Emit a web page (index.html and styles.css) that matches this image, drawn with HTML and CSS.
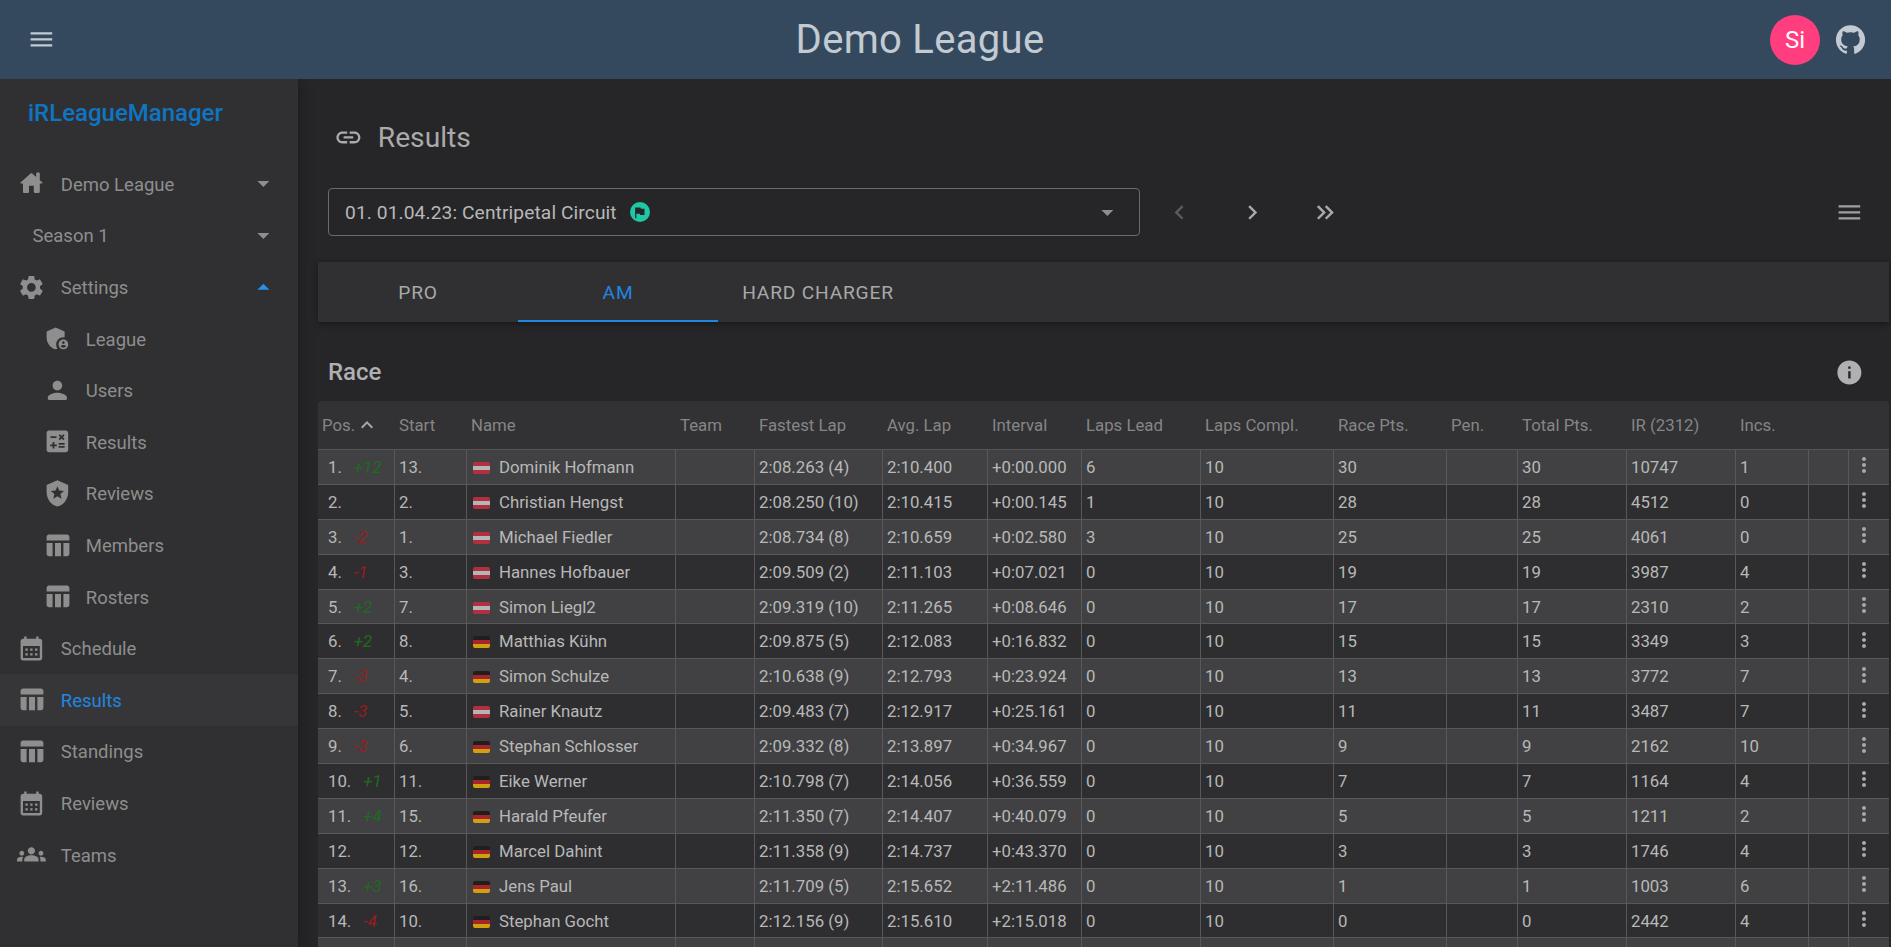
FILE: index.html
```html
<!doctype html>
<html lang="en">
    <head>
        <meta charset="UTF-8" />
        <meta name="viewport" content="width=device-width, initial-scale=1.0" />
        <title>Demo League - Results</title>
        <link rel="stylesheet" href="styles.css">
    </head>
    <body>
        <header class="appbar">
            <button class="appbar-menu" type="button" aria-label="Menu">
                <svg class="icon" viewBox="0 0 24 24"><path d="M3 18h18v-2H3v2zm0-5h18v-2H3v2zm0-7v2h18V6H3z"/></svg>
            </button>
            <div class="appbar-title">Demo League</div>
            <div class="appbar-right">
                <div class="avatar">Si</div>
                <svg class="github" viewBox="0 0 24 24"><path d="M12 .3a12 12 0 0 0-3.8 23.4c.6.1.8-.3.8-.6v-2c-3.3.7-4-1.6-4-1.6-.6-1.4-1.4-1.8-1.4-1.8-1-.7.1-.7.1-.7 1.2 0 1.9 1.2 1.9 1.2 1 1.8 2.8 1.3 3.5 1 0-.8.4-1.3.7-1.6-2.7-.3-5.5-1.3-5.5-6 0-1.2.5-2.3 1.3-3.1-.2-.4-.6-1.6 0-3.2 0 0 1-.3 3.4 1.2a11.5 11.5 0 0 1 6 0c2.3-1.5 3.3-1.2 3.3-1.2.6 1.6.2 2.8 0 3.2.9.8 1.3 1.9 1.3 3.2 0 4.6-2.8 5.6-5.5 5.9.5.4.9 1 .9 2.2v3.3c0 .3.1.7.8.6A12 12 0 0 0 12 .3"/></svg>
            </div>
        </header>

        <div class="layout">
            <aside class="sidebar">
                <div class="brand">iRLeagueManager</div>
                <nav>
                    <a class="nav-item">
                        <svg class="icon" viewBox="0 0 24 24"><path d="M10 19v-5h4v5c0 .55.45 1 1 1h3c.55 0 1-.45 1-1v-7h1.7c.46 0 .68-.57.33-.87L19 9.3V4c0-.55-.45-1-1-1h-1c-.55 0-1 .45-1 1v2.7l-3.33-3c-.38-.34-.96-.34-1.34 0l-8.36 7.53c-.34.3-.13.87.33.87H5v7c0 .55.45 1 1 1h3c.55 0 1-.45 1-1z"/></svg>
                        <span>Demo League</span>
                        <svg class="icon caret" viewBox="0 0 24 24"><path d="M7 10l5 5 5-5z"/></svg>
                    </a>
                    <a class="nav-item season">
                        <span>Season 1</span>
                        <svg class="icon caret" viewBox="0 0 24 24"><path d="M7 10l5 5 5-5z"/></svg>
                    </a>
                    <a class="nav-item">
                        <svg class="icon" viewBox="0 0 24 24"><path d="M19.14 12.94c.04-.3.06-.61.06-.94 0-.32-.02-.64-.07-.94l2.03-1.58c.18-.14.23-.41.12-.61l-1.92-3.32c-.12-.22-.37-.29-.59-.22l-2.39.96c-.5-.38-1.03-.7-1.62-.94l-.36-2.54c-.04-.24-.24-.41-.48-.41h-3.84c-.24 0-.43.17-.47.41l-.36 2.54c-.59.24-1.13.57-1.62.94l-2.39-.96c-.22-.08-.47 0-.59.22L2.74 8.87c-.12.21-.08.47.12.61l2.03 1.58c-.05.3-.09.63-.09.94s.02.64.07.94l-2.03 1.58c-.18.14-.23.41-.12.61l1.92 3.32c.12.22.37.29.59.22l2.39-.96c.5.38 1.03.7 1.62.94l.36 2.54c.05.24.24.41.48.41h3.84c.24 0 .44-.17.47-.41l.36-2.54c.59-.24 1.13-.56 1.62-.94l2.39.96c.22.08.47 0 .59-.22l1.92-3.32c.12-.22.07-.47-.12-.61l-2.01-1.58zM12 15.6c-1.98 0-3.6-1.62-3.6-3.6s1.62-3.6 3.6-3.6 3.6 1.62 3.6 3.6-1.62 3.6-3.6 3.6z"/></svg>
                        <span>Settings</span>
                        <svg class="icon caret caret-open" viewBox="0 0 24 24"><path d="M7 14l5-5 5 5z"/></svg>
                    </a>
                    <a class="nav-item sub">
                        <svg class="icon" viewBox="0 0 24 24"><path d="M17 11c.34 0 .67.04 1 .09V6.27L10.5 3 3 6.27v4.91c0 4.54 3.2 8.79 7.5 9.82.55-.13 1.08-.32 1.6-.55-.69-.98-1.1-2.17-1.1-3.45 0-3.31 2.69-6 6-6z"/><path d="M17 13c-2.21 0-4 1.79-4 4s1.79 4 4 4 4-1.79 4-4-1.79-4-4-4zm0 1.38c.62 0 1.12.51 1.12 1.12s-.51 1.12-1.12 1.12-1.12-.51-1.12-1.12.5-1.12 1.12-1.12zm0 5.37c-.93 0-1.74-.46-2.24-1.17.05-.72 1.51-1.08 2.24-1.08s2.19.36 2.24 1.08c-.5.71-1.31 1.17-2.24 1.17z"/></svg>
                        <span>League</span>
                    </a>
                    <a class="nav-item sub">
                        <svg class="icon" viewBox="0 0 24 24"><path d="M12 12c2.21 0 4-1.79 4-4s-1.79-4-4-4-4 1.79-4 4 1.79 4 4 4zm0 2c-2.67 0-8 1.34-8 4v1c0 .55.45 1 1 1h14c.55 0 1-.45 1-1v-1c0-2.66-5.33-4-8-4z"/></svg>
                        <span>Users</span>
                    </a>
                    <a class="nav-item sub">
                        <svg class="icon" viewBox="0 0 24 24"><path d="M19 3H5c-1.1 0-2 .9-2 2v14c0 1.1.9 2 2 2h14c1.1 0 2-.9 2-2V5c0-1.1-.9-2-2-2zm-5.97 4.06L14.09 6l1.41 1.41L16.91 6l1.06 1.06-1.41 1.41 1.41 1.41-1.06 1.06-1.41-1.4-1.41 1.41-1.06-1.06 1.41-1.41-1.41-1.42zm-6.78.66h5v1.5h-5v-1.5zM11.5 16h-2v2H8v-2H6v-1.5h2v-2h1.5v2h2V16zm6.5 1.25h-5v-1.5h5v1.5zm0-2.5h-5v-1.5h5v1.5z"/></svg>
                        <span>Results</span>
                    </a>
                    <a class="nav-item sub">
                        <svg class="icon" viewBox="0 0 24 24"><path d="M12 1 3 5v6c0 5.55 3.84 10.74 9 12 5.16-1.26 9-6.45 9-12V5l-9-4zm2.5 11.59.9 3.88L12 14.42l-3.4 2.05.9-3.87-3-2.59 3.96-.34L12 6.02l1.54 3.64 3.96.34-3 2.59z"/></svg>
                        <span>Reviews</span>
                    </a>
                    <a class="nav-item sub">
                        <svg class="icon" viewBox="0 0 24 24"><path d="M10 10.02h5V21h-5zM17 21h3c1.1 0 2-.9 2-2v-9h-5v11zm3-18H5c-1.1 0-2 .9-2 2v3h19V5c0-1.1-.9-2-2-2zM3 19c0 1.1.9 2 2 2h3V10H3v9z"/></svg>
                        <span>Members</span>
                    </a>
                    <a class="nav-item sub">
                        <svg class="icon" viewBox="0 0 24 24"><path d="M10 10.02h5V21h-5zM17 21h3c1.1 0 2-.9 2-2v-9h-5v11zm3-18H5c-1.1 0-2 .9-2 2v3h19V5c0-1.1-.9-2-2-2zM3 19c0 1.1.9 2 2 2h3V10H3v9z"/></svg>
                        <span>Rosters</span>
                    </a>
                    <a class="nav-item">
                        <svg class="icon" viewBox="0 0 24 24"><path d="M19 4h-1V2h-2v2H8V2H6v2H5c-1.1 0-2 .9-2 2v14c0 1.1.9 2 2 2h14c1.1 0 2-.9 2-2V6c0-1.1-.9-2-2-2zm0 16H5V10h14v10zM9 14H7v-2h2v2zm4 0h-2v-2h2v2zm4 0h-2v-2h2v2zm-8 4H7v-2h2v2zm4 0h-2v-2h2v2zm4 0h-2v-2h2v2z"/></svg>
                        <span>Schedule</span>
                    </a>
                    <a class="nav-item active">
                        <svg class="icon" viewBox="0 0 24 24"><path d="M10 10.02h5V21h-5zM17 21h3c1.1 0 2-.9 2-2v-9h-5v11zm3-18H5c-1.1 0-2 .9-2 2v3h19V5c0-1.1-.9-2-2-2zM3 19c0 1.1.9 2 2 2h3V10H3v9z"/></svg>
                        <span>Results</span>
                    </a>
                    <a class="nav-item">
                        <svg class="icon" viewBox="0 0 24 24"><path d="M10 10.02h5V21h-5zM17 21h3c1.1 0 2-.9 2-2v-9h-5v11zm3-18H5c-1.1 0-2 .9-2 2v3h19V5c0-1.1-.9-2-2-2zM3 19c0 1.1.9 2 2 2h3V10H3v9z"/></svg>
                        <span>Standings</span>
                    </a>
                    <a class="nav-item">
                        <svg class="icon" viewBox="0 0 24 24"><path d="M19 4h-1V2h-2v2H8V2H6v2H5c-1.1 0-2 .9-2 2v14c0 1.1.9 2 2 2h14c1.1 0 2-.9 2-2V6c0-1.1-.9-2-2-2zm0 16H5V10h14v10zM9 14H7v-2h2v2zm4 0h-2v-2h2v2zm4 0h-2v-2h2v2zm-8 4H7v-2h2v2zm4 0h-2v-2h2v2zm4 0h-2v-2h2v2z"/></svg>
                        <span>Reviews</span>
                    </a>
                    <a class="nav-item">
                        <svg class="icon" viewBox="0 0 24 24"><path d="M12 12.75c1.63 0 3.07.39 4.24.9 1.08.48 1.76 1.56 1.76 2.73V18H6v-1.61c0-1.18.68-2.26 1.76-2.73 1.17-.52 2.61-.91 4.24-.91zM4 13c1.1 0 2-.9 2-2s-.9-2-2-2-2 .9-2 2 .9 2 2 2zm1.13 1.1c-.37-.06-.74-.1-1.13-.1-.99 0-1.93.21-2.78.58C.48 14.9 0 15.62 0 16.43V18h4.5v-1.61c0-.83.23-1.61.63-2.29zM20 13c1.1 0 2-.9 2-2s-.9-2-2-2-2 .9-2 2 .9 2 2 2zm4 3.43c0-.81-.48-1.53-1.22-1.85-.85-.37-1.79-.58-2.78-.58-.39 0-.76.04-1.13.1.4.68.63 1.46.63 2.29V18H24v-1.57zM12 6c1.66 0 3 1.34 3 3s-1.34 3-3 3-3-1.34-3-3 1.34-3 3-3z"/></svg>
                        <span>Teams</span>
                    </a>
                </nav>
            </aside>

            <main class="content">
                <div class="page-title">
                    <svg class="icon" viewBox="0 0 24 24"><path d="M3.9 12c0-1.71 1.39-3.1 3.1-3.1h4V7H7c-2.76 0-5 2.24-5 5s2.24 5 5 5h4v-1.9H7c-1.71 0-3.1-1.39-3.1-3.1zM8 13h8v-2H8v2zm9-6h-4v1.9h4c1.71 0 3.1 1.39 3.1 3.1s-1.39 3.1-3.1 3.1h-4V17h4c2.76 0 5-2.24 5-5s-2.24-5-5-5z"/></svg>
                    <h1>Results</h1>
                </div>

                <div class="controls">
                    <div class="event-select">
                        <span>01. 01.04.23: Centripetal Circuit</span>
                        <span class="status-dot">
                            <svg viewBox="0 0 24 24"><path d="M14.4 6L14 4H5v17h2v-7h5.6l.4 2h7V6z"/></svg>
                        </span>
                        <svg class="icon select-caret" viewBox="0 0 24 24"><path d="M7 10l5 5 5-5z"/></svg>
                    </div>
                    <button class="step-btn disabled" type="button" aria-label="Previous">
                        <svg class="icon" viewBox="0 0 24 24"><path d="M15.41 7.41L14 6l-6 6 6 6 1.41-1.41L10.83 12z"/></svg>
                    </button>
                    <button class="step-btn" type="button" aria-label="Next">
                        <svg class="icon" viewBox="0 0 24 24"><path d="M10 6L8.59 7.41 13.17 12l-4.58 4.59L10 18l6-6z"/></svg>
                    </button>
                    <button class="step-btn" type="button" aria-label="Last">
                        <svg class="icon" viewBox="0 0 24 24"><path d="M6.41 6L5 7.41 9.58 12 5 16.59 6.41 18l6-6z"/><path d="M13 6l-1.41 1.41L16.17 12l-4.58 4.59L13 18l6-6z"/></svg>
                    </button>
                    <svg class="icon controls-menu" viewBox="0 0 24 24"><path d="M3 18h18v-2H3v2zm0-5h18v-2H3v2zm0-7v2h18V6H3z"/></svg>
                </div>

                <div class="tabs">
                    <div class="tab">PRO</div>
                    <div class="tab active">AM</div>
                    <div class="tab">HARD CHARGER</div>
                </div>

                <div class="section-head">
                    <h2>Race</h2>
                    <svg class="icon" viewBox="0 0 24 24"><path d="M12 2C6.48 2 2 6.48 2 12s4.48 10 10 10 10-4.48 10-10S17.52 2 12 2zm1 15h-2v-6h2v6zm0-8h-2V7h2v2z"/></svg>
                </div>

                <table class="results">
                    <colgroup>
                        <col class="c-pos"><col class="c-start"><col class="c-name"><col class="c-team">
                        <col class="c-fast"><col class="c-avg"><col class="c-int"><col class="c-lead">
                        <col class="c-compl"><col class="c-race"><col class="c-pen"><col class="c-total">
                        <col class="c-ir"><col class="c-inc"><col class="c-extra"><col class="c-more">
                    </colgroup>
                    <thead>
                        <tr>
                            <th class="pos-head">Pos.<svg class="sort" viewBox="0 0 24 24"><path d="M7.41 15.41L12 10.83l4.59 4.58L18 14l-6-6-6 6z"/></svg></th>
                            <th>Start</th><th>Name</th><th>Team</th><th>Fastest Lap</th><th>Avg. Lap</th><th>Interval</th><th>Laps Lead</th>
                            <th>Laps Compl.</th><th>Race Pts.</th><th>Pen.</th><th>Total Pts.</th><th>IR (2312)</th><th>Incs.</th><th></th><th></th>
                        </tr>
                    </thead>
                    <tbody>
                        <tr>
                            <td class="pos"><span class="place">1.</span><i class="gain">+12</i></td><td>13.</td>
                            <td><span class="flag at"></span>Dominik Hofmann</td><td></td>
                            <td>2:08.263 (4)</td><td>2:10.400</td><td>+0:00.000</td><td>6</td><td>10</td><td>30</td><td></td><td>30</td><td>10747</td><td>1</td><td></td>
                            <td class="more"><svg class="dots" viewBox="0 0 24 24"><use href="#more-dots"/></svg></td>
                        </tr>
                        <tr>
                            <td class="pos"><span class="place">2.</span></td><td>2.</td>
                            <td><span class="flag at"></span>Christian Hengst</td><td></td>
                            <td>2:08.250 (10)</td><td>2:10.415</td><td>+0:00.145</td><td>1</td><td>10</td><td>28</td><td></td><td>28</td><td>4512</td><td>0</td><td></td>
                            <td class="more"><svg class="dots" viewBox="0 0 24 24"><use href="#more-dots"/></svg></td>
                        </tr>
                        <tr>
                            <td class="pos"><span class="place">3.</span><i class="loss">-2</i></td><td>1.</td>
                            <td><span class="flag at"></span>Michael Fiedler</td><td></td>
                            <td>2:08.734 (8)</td><td>2:10.659</td><td>+0:02.580</td><td>3</td><td>10</td><td>25</td><td></td><td>25</td><td>4061</td><td>0</td><td></td>
                            <td class="more"><svg class="dots" viewBox="0 0 24 24"><use href="#more-dots"/></svg></td>
                        </tr>
                        <tr>
                            <td class="pos"><span class="place">4.</span><i class="loss">-1</i></td><td>3.</td>
                            <td><span class="flag at"></span>Hannes Hofbauer</td><td></td>
                            <td>2:09.509 (2)</td><td>2:11.103</td><td>+0:07.021</td><td>0</td><td>10</td><td>19</td><td></td><td>19</td><td>3987</td><td>4</td><td></td>
                            <td class="more"><svg class="dots" viewBox="0 0 24 24"><use href="#more-dots"/></svg></td>
                        </tr>
                        <tr>
                            <td class="pos"><span class="place">5.</span><i class="gain">+2</i></td><td>7.</td>
                            <td><span class="flag at"></span>Simon Liegl2</td><td></td>
                            <td>2:09.319 (10)</td><td>2:11.265</td><td>+0:08.646</td><td>0</td><td>10</td><td>17</td><td></td><td>17</td><td>2310</td><td>2</td><td></td>
                            <td class="more"><svg class="dots" viewBox="0 0 24 24"><use href="#more-dots"/></svg></td>
                        </tr>
                        <tr>
                            <td class="pos"><span class="place">6.</span><i class="gain">+2</i></td><td>8.</td>
                            <td><span class="flag de"></span>Matthias Kühn</td><td></td>
                            <td>2:09.875 (5)</td><td>2:12.083</td><td>+0:16.832</td><td>0</td><td>10</td><td>15</td><td></td><td>15</td><td>3349</td><td>3</td><td></td>
                            <td class="more"><svg class="dots" viewBox="0 0 24 24"><use href="#more-dots"/></svg></td>
                        </tr>
                        <tr>
                            <td class="pos"><span class="place">7.</span><i class="loss">-3</i></td><td>4.</td>
                            <td><span class="flag de"></span>Simon Schulze</td><td></td>
                            <td>2:10.638 (9)</td><td>2:12.793</td><td>+0:23.924</td><td>0</td><td>10</td><td>13</td><td></td><td>13</td><td>3772</td><td>7</td><td></td>
                            <td class="more"><svg class="dots" viewBox="0 0 24 24"><use href="#more-dots"/></svg></td>
                        </tr>
                        <tr>
                            <td class="pos"><span class="place">8.</span><i class="loss">-3</i></td><td>5.</td>
                            <td><span class="flag at"></span>Rainer Knautz</td><td></td>
                            <td>2:09.483 (7)</td><td>2:12.917</td><td>+0:25.161</td><td>0</td><td>10</td><td>11</td><td></td><td>11</td><td>3487</td><td>7</td><td></td>
                            <td class="more"><svg class="dots" viewBox="0 0 24 24"><use href="#more-dots"/></svg></td>
                        </tr>
                        <tr>
                            <td class="pos"><span class="place">9.</span><i class="loss">-3</i></td><td>6.</td>
                            <td><span class="flag de"></span>Stephan Schlosser</td><td></td>
                            <td>2:09.332 (8)</td><td>2:13.897</td><td>+0:34.967</td><td>0</td><td>10</td><td>9</td><td></td><td>9</td><td>2162</td><td>10</td><td></td>
                            <td class="more"><svg class="dots" viewBox="0 0 24 24"><use href="#more-dots"/></svg></td>
                        </tr>
                        <tr>
                            <td class="pos"><span class="place">10.</span><i class="gain">+1</i></td><td>11.</td>
                            <td><span class="flag de"></span>Eike Werner</td><td></td>
                            <td>2:10.798 (7)</td><td>2:14.056</td><td>+0:36.559</td><td>0</td><td>10</td><td>7</td><td></td><td>7</td><td>1164</td><td>4</td><td></td>
                            <td class="more"><svg class="dots" viewBox="0 0 24 24"><use href="#more-dots"/></svg></td>
                        </tr>
                        <tr>
                            <td class="pos"><span class="place">11.</span><i class="gain">+4</i></td><td>15.</td>
                            <td><span class="flag de"></span>Harald Pfeufer</td><td></td>
                            <td>2:11.350 (7)</td><td>2:14.407</td><td>+0:40.079</td><td>0</td><td>10</td><td>5</td><td></td><td>5</td><td>1211</td><td>2</td><td></td>
                            <td class="more"><svg class="dots" viewBox="0 0 24 24"><use href="#more-dots"/></svg></td>
                        </tr>
                        <tr>
                            <td class="pos"><span class="place">12.</span></td><td>12.</td>
                            <td><span class="flag de"></span>Marcel Dahint</td><td></td>
                            <td>2:11.358 (9)</td><td>2:14.737</td><td>+0:43.370</td><td>0</td><td>10</td><td>3</td><td></td><td>3</td><td>1746</td><td>4</td><td></td>
                            <td class="more"><svg class="dots" viewBox="0 0 24 24"><use href="#more-dots"/></svg></td>
                        </tr>
                        <tr>
                            <td class="pos"><span class="place">13.</span><i class="gain">+3</i></td><td>16.</td>
                            <td><span class="flag de"></span>Jens Paul</td><td></td>
                            <td>2:11.709 (5)</td><td>2:15.652</td><td>+2:11.486</td><td>0</td><td>10</td><td>1</td><td></td><td>1</td><td>1003</td><td>6</td><td></td>
                            <td class="more"><svg class="dots" viewBox="0 0 24 24"><use href="#more-dots"/></svg></td>
                        </tr>
                        <tr>
                            <td class="pos"><span class="place">14.</span><i class="loss">-4</i></td><td>10.</td>
                            <td><span class="flag de"></span>Stephan Gocht</td><td></td>
                            <td>2:12.156 (9)</td><td>2:15.610</td><td>+2:15.018</td><td>0</td><td>10</td><td>0</td><td></td><td>0</td><td>2442</td><td>4</td><td></td>
                            <td class="more"><svg class="dots" viewBox="0 0 24 24"><use href="#more-dots"/></svg></td>
                        </tr>
                        <tr>
                            <td></td><td></td><td></td><td></td><td></td><td></td><td></td><td></td>
                            <td></td><td></td><td></td><td></td><td></td><td></td><td></td><td></td>
                        </tr>
                    </tbody>
                </table>
            </main>
        </div>

        <svg class="sprite" aria-hidden="true">
            <symbol id="more-dots" viewBox="0 0 24 24">
                <path d="M12 8c1.1 0 2-.9 2-2s-.9-2-2-2-2 .9-2 2 .9 2 2 2zm0 2c-1.1 0-2 .9-2 2s.9 2 2 2 2-.9 2-2-.9-2-2-2zm0 6c-1.1 0-2 .9-2 2s.9 2 2 2 2-.9 2-2-.9-2-2-2z"/>
            </symbol>
        </svg>
    </body>
</html>
```

FILE: styles.css
```css
* {
    margin: 0;
    padding: 0;
    box-sizing: border-box;
}

body {
    font-family: "Roboto", "Liberation Sans", sans-serif;
    height: 100vh;
    display: flex;
    flex-direction: column;
    overflow: hidden;
    background: #262628;
    color: #b8b8b8;
}

button {
    background: none;
    border: none;
    color: inherit;
}

.icon {
    width: 28.8px;
    height: 28.8px;
    flex: none;
    fill: currentColor;
}

.sprite {
    display: none;
}

/* top bar */
.appbar {
    height: 79px;
    flex: none;
    display: flex;
    align-items: center;
    padding: 0 26px 0 27px;
    background: #35495e;
    color: #c2cad2;
    position: relative;
    z-index: 2;
}

.appbar-menu {
    width: 43px;
    height: 29px;
    text-align: left;
}

.appbar-title {
    flex: 1;
    text-align: center;
    font-size: 40px;
    letter-spacing: 0.3px;
}

.appbar-right {
    display: flex;
    align-items: center;
    gap: 16px;
}

.avatar {
    width: 50px;
    height: 50px;
    border-radius: 50%;
    background: #ff3d7f;
    color: #fff;
    display: flex;
    align-items: center;
    justify-content: center;
    font-size: 24px;
}

.github {
    width: 29px;
    height: 29px;
    fill: currentColor;
}

/* sidebar */
.layout {
    flex: 1;
    display: flex;
    min-height: 0;
}

.sidebar {
    width: 298px;
    flex: none;
    background: #303032;
    color: #8e8e8e;
    box-shadow: 0 0 14px rgba(0, 0, 0, 0.35);
    position: relative;
}

.brand {
    height: 79px;
    padding: 16px 0 0 28px;
    line-height: 36px;
    font-size: 24px;
    font-weight: 500;
    color: #0f75c2;
}

.nav-item {
    height: 51.6px;
    display: flex;
    align-items: center;
    gap: 15px;
    padding: 0 20px 0 17px;
    font-size: 18.5px;
}

.nav-item span {
    padding-top: 2px;
}

.nav-item .caret {
    margin-left: auto;
}

.nav-item.season {
    padding-left: 32.5px;
}

.nav-item.sub {
    padding-left: 43px;
    gap: 14px;
}

.caret-open {
    color: #2a8fe6;
}

.nav-item.active {
    background: #363638;
}

.nav-item.active span {
    color: #2186e0;
}

/* main column */
.content {
    flex: 1;
    min-width: 0;
    padding: 28px 2px 0 20px;
}

.page-title {
    height: 60px;
    display: flex;
    align-items: center;
    gap: 15px;
    padding-left: 16px;
    color: #aaaaaa;
}

.page-title h1 {
    font-size: 28.2px;
    font-weight: 400;
}

.controls {
    height: 48px;
    margin: 21px 25px 0 10px;
    display: flex;
    align-items: center;
}

.event-select {
    width: 812px;
    height: 48px;
    border: 1px solid #6a6a6c;
    border-radius: 4px;
    display: flex;
    align-items: center;
    padding: 0 17px 0 16px;
    gap: 13px;
    font-size: 19.2px;
    letter-spacing: 0.1px;
    color: #b8b8b8;
}

.status-dot {
    width: 20px;
    height: 20px;
    border-radius: 50%;
    background: #1ec8a5;
    display: flex;
    align-items: center;
    justify-content: center;
}

.status-dot svg {
    width: 15px;
    height: 15px;
    fill: #262628;
}

.select-caret {
    margin-left: auto;
    color: #8e8e8e;
}

.step-btn {
    width: 73px;
    height: 48px;
    display: flex;
    align-items: center;
    justify-content: center;
    color: #aaaaaa;
}

.step-btn:first-of-type {
    margin-left: 3px;
}

.step-btn.disabled {
    color: #5c5c5e;
}

.controls-menu {
    margin-left: auto;
    color: #a0a0a0;
}

.tabs {
    height: 60px;
    margin-top: 26px;
    display: flex;
    background: #303032;
    box-shadow: 0 2px 6px rgba(0, 0, 0, 0.4);
}

.tab {
    width: 200px;
    display: flex;
    align-items: center;
    justify-content: center;
    font-size: 19.2px;
    letter-spacing: 0.8px;
    color: #a8a8a8;
}

.tab.active {
    color: #2186e0;
    border-bottom: 2px solid #2186e0;
    padding-top: 2px;
}

.section-head {
    height: 40px;
    margin: 30px 25px 0 10px;
    display: flex;
    align-items: center;
    justify-content: space-between;
    color: #b0b0b2;
}

.section-head h2 {
    font-size: 24px;
    font-weight: 500;
}

/* results table */
.results {
    width: 1571px;
    margin-top: 9px;
    table-layout: fixed;
    border-collapse: separate;
    border-spacing: 0;
    font-size: 16.8px;
}

.c-pos { width: 77px; }
.c-start { width: 72px; }
.c-name { width: 209px; }
.c-team { width: 79px; }
.c-fast { width: 128px; }
.c-avg { width: 105px; }
.c-int { width: 94px; }
.c-lead { width: 119px; }
.c-compl { width: 133px; }
.c-race { width: 113px; }
.c-pen { width: 71px; }
.c-total { width: 109px; }
.c-ir { width: 109px; }
.c-inc { width: 73px; }
.c-extra { width: 40px; }
.c-more { width: 40px; }

.results th {
    height: 49px;
    padding: 0 0 1px 4px;
    background: #323234;
    border-bottom: 1px solid #555557;
    color: #858587;
    font-weight: 400;
    text-align: left;
    white-space: nowrap;
}

.results th:first-child {
    border-top-left-radius: 4px;
}

.results th:last-child {
    border-top-right-radius: 4px;
}

.sort {
    width: 24px;
    height: 24px;
    vertical-align: -6px;
    fill: #a8a8a8;
}

.results td {
    height: 34.9px;
    padding: 0 0 0 4px;
    border-bottom: 1px solid #58585a;
    border-right: 1px solid #58585a;
    background: #2e2e30;
    white-space: nowrap;
}

.results td:last-child {
    border-right: none;
}

.results tbody tr:nth-child(odd) td {
    background: #414143;
}

.results td.pos {
    padding-left: 10px;
}

.place {
    margin-right: 12px;
}

.gain {
    color: #1f6b1f;
}

.loss {
    color: #9c1c1c;
}

.flag {
    display: inline-block;
    width: 17px;
    height: 12px;
    margin: 0 9px 0 2px;
    border-radius: 2px;
    vertical-align: -1px;
}

.flag.at {
    background: linear-gradient(#b0303f 33%, #b5b5b5 33%, #b5b5b5 67%, #b0303f 67%);
}

.flag.de {
    background: linear-gradient(#1f1f1f 33%, #a8242a 33%, #a8242a 67%, #cfa010 67%);
}

.results td.more {
    padding: 0 0 0 3px;
}

.dots {
    display: block;
    width: 24px;
    height: 24px;
    margin-top: -3px;
    fill: #a8a8a8;
}
```
